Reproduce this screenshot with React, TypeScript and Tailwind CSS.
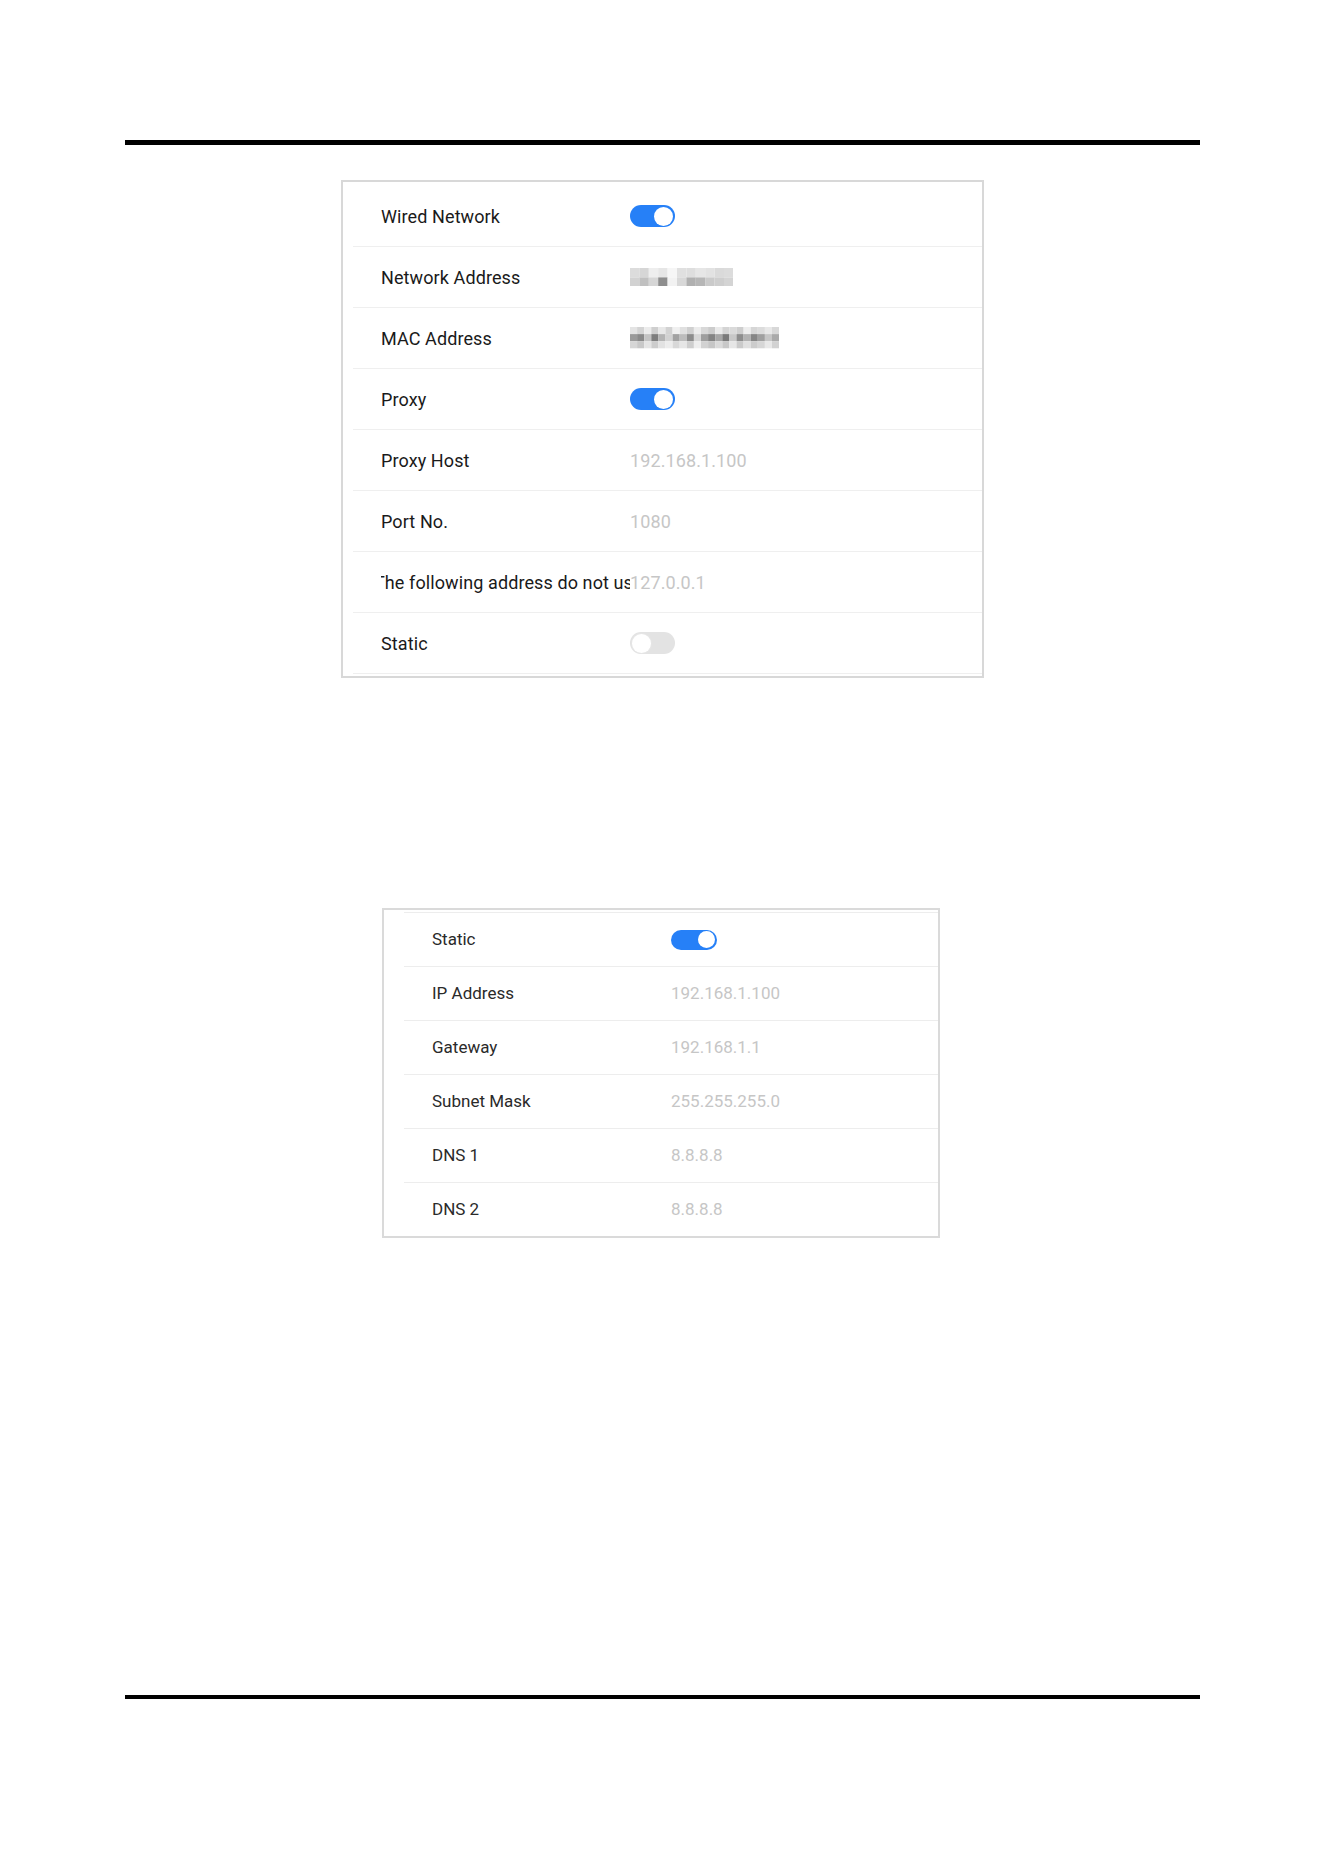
import type { ReactNode } from "react";

type Row = {
  label: string;
  value?: ReactNode;
};

// grey mosaic used to hide addresses in the settings list
function Mosaic({ cols, rows, cell, shades }: { cols: number; rows: number; cell: number; shades: string[][] }) {
  const w = cols * cell;
  const h = rows * cell;
  return (
    <svg width={w} height={h} viewBox={`0 0 ${w} ${h}`} className="blur-[0.6px]">
      {shades.map((line, r) =>
        line.slice(0, cols).map((c, i) => (
          <rect key={`${r}-${i}`} x={i * cell} y={r * cell} width={cell} height={cell} fill={c} />
        ))
      )}
    </svg>
  );
}

const netShades = [
  ["#dcdcdc", "#d6d6d6", "#eeeeee", "#e6e6e6", "#f6f6f6", "#e0e0e0", "#dedede", "#e6e6e6", "#e2e2e2", "#dadada", "#dcdcdc"],
  ["#d2d2d2", "#c0c0c0", "#d6d6d6", "#8e8e8e", "#f2f2f2", "#d8d8d8", "#b0b0b0", "#b6b6b6", "#cacaca", "#cecece", "#d4d4d4"],
];

const macShades = [
  ["#e4e4e4", "#d4d4d4", "#ececec", "#cfcfcf", "#e8e8e8", "#d2d2d2", "#f0f0f0", "#e0e0e0", "#d0d0d0", "#ececec", "#d8d8d8", "#cccccc", "#eaeaea", "#d4d4d4", "#dadada", "#cecece", "#eeeeee", "#d6d6d6", "#dcdcdc", "#e8e8e8", "#d8d8d8"],
  ["#9a9a9a", "#8a8a8a", "#c4c4c4", "#7e7e7e", "#b4b4b4", "#d2d2d2", "#a2a2a2", "#bcbcbc", "#8c8c8c", "#d6d6d6", "#9e9e9e", "#848484", "#a6a6a6", "#7a7a7a", "#c8c8c8", "#8e8e8e", "#b2b2b2", "#868686", "#a0a0a0", "#c6c6c6", "#aaaaaa"],
  ["#d6d6d6", "#c8c8c8", "#e4e4e4", "#cccccc", "#e2e2e2", "#ececec", "#d8d8d8", "#e6e6e6", "#cecece", "#eeeeee", "#d2d2d2", "#c6c6c6", "#dadada", "#c8c8c8", "#e6e6e6", "#cacaca", "#e0e0e0", "#cccccc", "#d6d6d6", "#e8e8e8", "#d2d2d2"],
];

function Toggle({ on, big }: { on: boolean; big?: boolean }) {
  const track = big ? "w-[45px] h-[22px] px-[2px]" : "w-[46px] h-[20px] px-[2px]";
  const knob = big ? "w-[19px] h-[19px]" : "w-[17px] h-[17px]";
  return (
    <div
      className={`${track} rounded-full flex items-center ${
        on ? "bg-[#2680f7] justify-end" : "bg-[#e3e3e3] justify-start"
      }`}
    >
      <div className={`${knob} rounded-full bg-white ${on ? "" : "shadow-[0_0_0_1px_#e6e6e6]"}`} />
    </div>
  );
}

const Value = ({ children }: { children: ReactNode }) => <span className="text-[#c6c6c6]">{children}</span>;

const proxyRows: Row[] = [
  { label: "Wired Network", value: <Toggle on big /> },
  { label: "Network Address", value: <Mosaic cols={11} rows={2} cell={9.4} shades={netShades} /> },
  { label: "MAC Address", value: <Mosaic cols={21} rows={3} cell={7.1} shades={macShades} /> },
  { label: "Proxy", value: <Toggle on big /> },
  { label: "Proxy Host", value: <Value>192.168.1.100</Value> },
  { label: "Port No.", value: <Value>1080</Value> },
  { label: "The following address do not use proxy", value: <Value>127.0.0.1</Value> },
  { label: "Static", value: <Toggle on={false} big /> },
];

const staticRows: Row[] = [
  { label: "Static", value: <Toggle on /> },
  { label: "IP Address", value: <Value>192.168.1.100</Value> },
  { label: "Gateway", value: <Value>192.168.1.1</Value> },
  { label: "Subnet Mask", value: <Value>255.255.255.0</Value> },
  { label: "DNS 1", value: <Value>8.8.8.8</Value> },
  { label: "DNS 2", value: <Value>8.8.8.8</Value> },
];

export default function App() {
  return (
    <div className="w-[1324px] h-[1872px] bg-white flex flex-col font-['Roboto',sans-serif]">
      <div className="mt-[140px] ml-[125px] w-[1075px] h-[5px] bg-black" />

      {/* network / proxy settings */}
      <div className="mt-[35px] ml-[341px] w-[643px] border-2 border-[#d8d8d8] pt-[4px] pb-[2px] text-[#1a1a1a]">
        {proxyRows.map((row) => (
          <div key={row.label} className="ml-[10px] h-[61px] border-b border-[#efefef] flex items-center text-[18px] tracking-[0.1px]">
            <div className="ml-[28px] w-[249px] overflow-hidden whitespace-nowrap">
              <span className={row.label.startsWith("The") ? "inline-block -ml-[7px]" : ""}>{row.label}</span>
            </div>
            <div className="flex items-center">{row.value}</div>
          </div>
        ))}
      </div>

      {/* static IP settings */}
      <div className="mt-[230px] ml-[382px] w-[558px] border-2 border-[#dadada] pt-[2px] text-[#2a2a2a]">
        {staticRows.map((row) => (
          <div key={row.label} className="ml-[20px] h-[54px] border-t border-[#ededed] flex items-center text-[17px]">
            <div className="ml-[28px] w-[239px] whitespace-nowrap">{row.label}</div>
            <div className="flex items-center">{row.value}</div>
          </div>
        ))}
      </div>

      <div className="mt-[457px] ml-[125px] w-[1075px] h-[4px] bg-black" />
    </div>
  );
}
